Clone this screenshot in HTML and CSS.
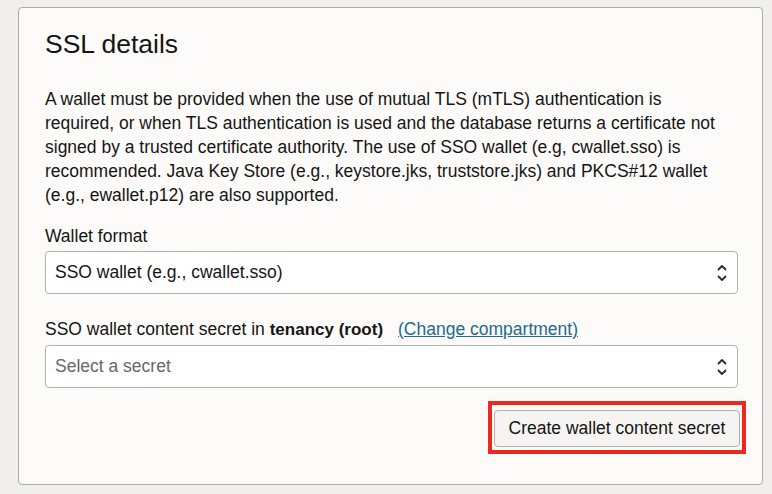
FILE: index.html
```html
<!DOCTYPE html>
<html lang="en">
<head>
<meta charset="utf-8">
<title>SSL details</title>
<link rel="stylesheet" href="styles.css">
</head>
<body>
<section class="card">
  <h2 class="title">SSL details</h2>
  <p class="desc">A wallet must be provided when the use of mutual TLS (mTLS) authentication is required, or when TLS authentication is used and the database returns a certificate not signed by a trusted certificate authority. The use of SSO wallet (e.g, cwallet.sso) is recommended. Java Key Store (e.g., keystore.jks, truststore.jks) and PKCS#12 wallet (e.g., ewallet.p12) are also supported.</p>

  <div class="field field-first">
    <div class="label">Wallet format</div>
    <div class="select">
      <span class="value">SSO wallet (e.g., cwallet.sso)</span>
      <svg class="chev" width="10" height="18" viewBox="0 0 10 18"><path d="M1.5 5.5 L5 2 L8.5 5.5 M1.5 12.5 L5 16 L8.5 12.5" fill="none" stroke="#2b2a28" stroke-width="1.8" stroke-linecap="round" stroke-linejoin="round"/></svg>
    </div>
  </div>

  <div class="field">
    <div class="label">SSO wallet content secret in <b>tenancy (root)</b><a class="link" href="#">(Change compartment)</a></div>
    <div class="select">
      <span class="value placeholder">Select a secret</span>
      <svg class="chev" width="10" height="18" viewBox="0 0 10 18"><path d="M1.5 5.5 L5 2 L8.5 5.5 M1.5 12.5 L5 16 L8.5 12.5" fill="none" stroke="#2b2a28" stroke-width="1.8" stroke-linecap="round" stroke-linejoin="round"/></svg>
    </div>
  </div>

  <div class="actions">
    <div class="highlight">
      <button class="btn" type="button">Create wallet content secret</button>
    </div>
  </div>
</section>
</body>
</html>
```

FILE: styles.css
```css
html, body {
  margin: 0;
  padding: 0;
}
body {
  background: #f1efed;
  font-family: "Liberation Sans", Arial, Helvetica, sans-serif;
  color: #161513;
  padding: 7px 9px 0 18px;
}
.card {
  width: 693px;
  background: #fcfbfa;
  border: 1px solid #aeaba7;
  border-radius: 4px;
  padding: 20px 24px 30px 26px;
}
.title {
  margin: 0;
  font-size: 26.5px;
  line-height: 32px;
  font-weight: normal;
}
.desc {
  margin: 27px 0 0 0;
  font-size: 17.5px;
  line-height: 24px;
  max-width: 684px;
}
.field {
  margin-top: 23px;
}
.field-first {
  margin-top: 17px;
}
.label {
  font-size: 17.5px;
  line-height: 24px;
  margin-bottom: 3px;
}
.label b {
  font-weight: bold;
  font-size: 17px;
}
.link {
  margin-left: 15px;
  color: #1e6b8b;
  text-decoration: underline;
}
.select {
  box-sizing: border-box;
  height: 43px;
  border: 1px solid #b3b0ad;
  border-radius: 4px;
  background: #ffffff;
  display: flex;
  align-items: center;
  justify-content: space-between;
  padding: 0 10px 0 9px;
  font-size: 17.5px;
}
.placeholder {
  color: #6a6764;
}
.chev {
  display: block;
}
.actions {
  display: flex;
  justify-content: flex-end;
  margin-top: 13px;
  margin-right: -8px;
}
.highlight {
  border: 4px solid #ea2a1c;
  padding: 5px 2px 3px 2px;
}
.btn {
  display: block;
  box-sizing: border-box;
  width: 246px;
  height: 37px;
  background: #f5f4f2;
  border: 1px solid #b3b0ad;
  border-radius: 4px;
  font-family: "Liberation Sans", Arial, Helvetica, sans-serif;
  font-size: 17.5px;
  color: #161513;
  padding: 0;
}
```
